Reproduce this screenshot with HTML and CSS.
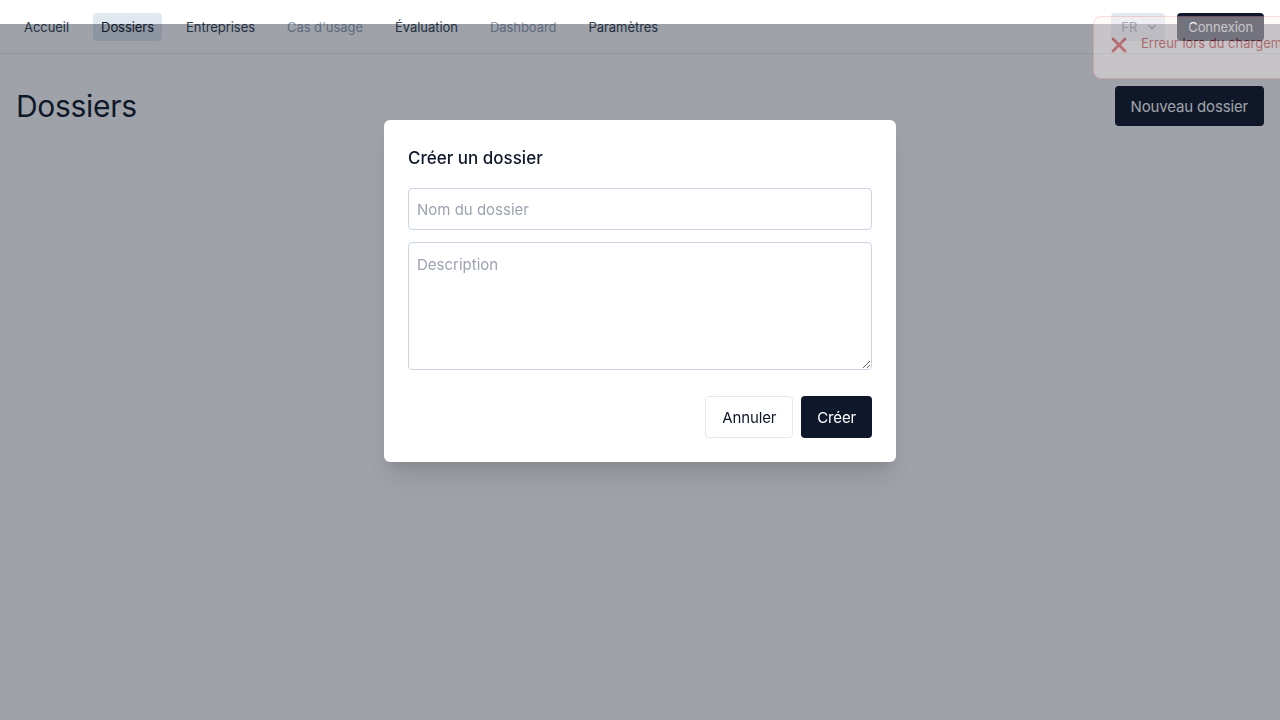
FILE: index.html
```html
<!DOCTYPE html>
<html lang="fr">
<head>
<meta charset="utf-8">
<title>Dossiers</title>
<link rel="stylesheet" href="styles.css">
</head>
<body>
<header class="topbar">
  <nav class="nav">
    <a class="nav-item">Accueil</a>
    <a class="nav-item active">Dossiers</a>
    <a class="nav-item">Entreprises</a>
    <a class="nav-item disabled">Cas d'usage</a>
    <a class="nav-item">Évaluation</a>
    <a class="nav-item disabled">Dashboard</a>
    <a class="nav-item">Paramètres</a>
  </nav>
  <div class="actions">
    <div class="lang">
      <span>FR</span>
      <svg width="10" height="10" viewBox="0 0 10 10"><path d="M2 3.5 L5 6.5 L8 3.5" fill="none" stroke="currentColor" stroke-width="1.4" stroke-linecap="round" stroke-linejoin="round"/></svg>
    </div>
    <button class="btn-login">Connexion</button>
  </div>
</header>

<main class="main">
  <div class="title-row">
    <h1 class="page-title">Dossiers</h1>
    <button class="btn-primary btn-lg">Nouveau dossier</button>
  </div>
</main>

<div class="overlay">
  <div class="modal">
    <h2 class="modal-title">Créer un dossier</h2>
    <div class="form">
      <input class="field" type="text" placeholder="Nom du dossier">
      <textarea class="field area" placeholder="Description"></textarea>
    </div>
    <div class="modal-actions">
      <button class="btn-outline">Annuler</button>
      <button class="btn-primary">Créer</button>
    </div>
  </div>
</div>

<div class="toast">
  <svg class="toast-icon" width="18" height="18" viewBox="0 0 18 18"><path d="M3 3 L15 15 M15 3 L3 15" stroke="currentColor" stroke-width="2.8" stroke-linecap="round"/></svg>
  <span class="toast-text">Erreur lors du chargement des dossiers</span>
</div>
</body>
</html>
```

FILE: styles.css
```css
html {
  font-size: 15px;
}
html, body {
  margin: 0;
  padding: 0;
  overflow: hidden;
  height: 100%;
}
body {
  font-family: Inter, "Liberation Sans", sans-serif;
  color: #0f172a;
  background: #ffffff;
}

.topbar {
  display: flex;
  justify-content: space-between;
  align-items: center;
  height: 53px;
  padding: 0 16px;
  border-bottom: 1px solid #e2e8f0;
}
.nav {
  display: flex;
  gap: 16px;
  align-items: center;
}
.nav-item {
  font-size: 13px;
  line-height: 20px;
  padding: 4px 8px;
  border-radius: 4px;
  color: #334155;
  letter-spacing: -0.05px;
}
.nav-item.active {
  background: #e2e8f0;
  color: #0f172a;
}
.nav-item.disabled {
  color: #94a3b8;
}
.actions {
  display: flex;
  align-items: center;
  gap: 12px;
}
.lang {
  display: flex;
  align-items: center;
  justify-content: space-between;
  width: 54px;
  height: 28px;
  box-sizing: border-box;
  padding: 0 8px 0 10px;
  background: #e2e8f0;
  border-radius: 4px;
  color: #64748b;
  font-size: 13px;
}
.btn-login {
  height: 28px;
  padding: 0 11px;
  background: #0f172a;
  color: #ffffff;
  border: none;
  border-radius: 4px;
  font-family: inherit;
  font-size: 13px;
  letter-spacing: -0.1px;
}

.main {
  padding: 32px 16px;
}
.title-row {
  display: flex;
  justify-content: space-between;
  align-items: center;
}
.page-title {
  margin: 0;
  font-size: 30px;
  line-height: 36px;
  font-weight: 400;
  color: #0f172a;
  letter-spacing: -0.3px;
}
.btn-primary {
  height: 42px;
  padding: 0 16px;
  background: #0f172a;
  color: #ffffff;
  border: none;
  border-radius: 4px;
  font-family: inherit;
  font-size: 15px;
  letter-spacing: -0.15px;
}
.btn-lg {
  height: 40px;
}
.btn-outline {
  height: 42px;
  padding: 0 16px;
  background: #ffffff;
  color: #0f172a;
  border: 1px solid #e2e8f0;
  border-radius: 4px;
  font-family: inherit;
  font-size: 15px;
  letter-spacing: -0.15px;
}

.overlay {
  position: fixed;
  top: 24px;
  left: 0;
  right: 0;
  bottom: 0;
  background: rgba(16, 24, 40, 0.4);
  display: flex;
  justify-content: center;
  align-items: flex-start;
  padding-top: 96px;
  z-index: 40;
}
.modal {
  width: 512px;
  box-sizing: border-box;
  padding: 24px;
  background: #ffffff;
  border-radius: 6px;
  box-shadow: 0 20px 25px -5px rgba(0,0,0,0.1), 0 8px 10px -6px rgba(0,0,0,0.1);
}
.modal-title {
  margin: 0 0 16px;
  font-size: 17px;
  line-height: 28px;
  font-weight: 500;
  color: #0f172a;
}
.form {
  display: flex;
  flex-direction: column;
  gap: 12px;
}
.field {
  display: block;
  width: 100%;
  box-sizing: border-box;
  height: 42px;
  padding: 8px;
  border: 1px solid #cbd5e1;
  border-radius: 4px;
  font-family: inherit;
  font-size: 15px;
  line-height: 24px;
  color: #0f172a;
  margin: 0;
}
.field::placeholder {
  color: #9ca3af;
}
.area {
  height: 128px;
  padding-top: 10px;
  resize: vertical;
}
.modal-actions {
  display: flex;
  justify-content: flex-end;
  gap: 8px;
  margin-top: 26px;
}

.toast {
  position: fixed;
  top: 16px;
  left: 1093px;
  width: 360px;
  min-height: 63px;
  box-sizing: border-box;
  display: flex;
  align-items: flex-start;
  gap: 13px;
  padding: 16px;
  background: #fef2f2;
  border: 1px solid #fca5a5;
  border-radius: 8px;
  opacity: 0.42;
  z-index: 50;
}
.toast-icon {
  color: #dc2626;
  flex: none;
  margin-top: 3px;
}
.toast-text {
  font-size: 13px;
  line-height: 20px;
  color: #b91c1c;
  white-space: nowrap;
}
```
